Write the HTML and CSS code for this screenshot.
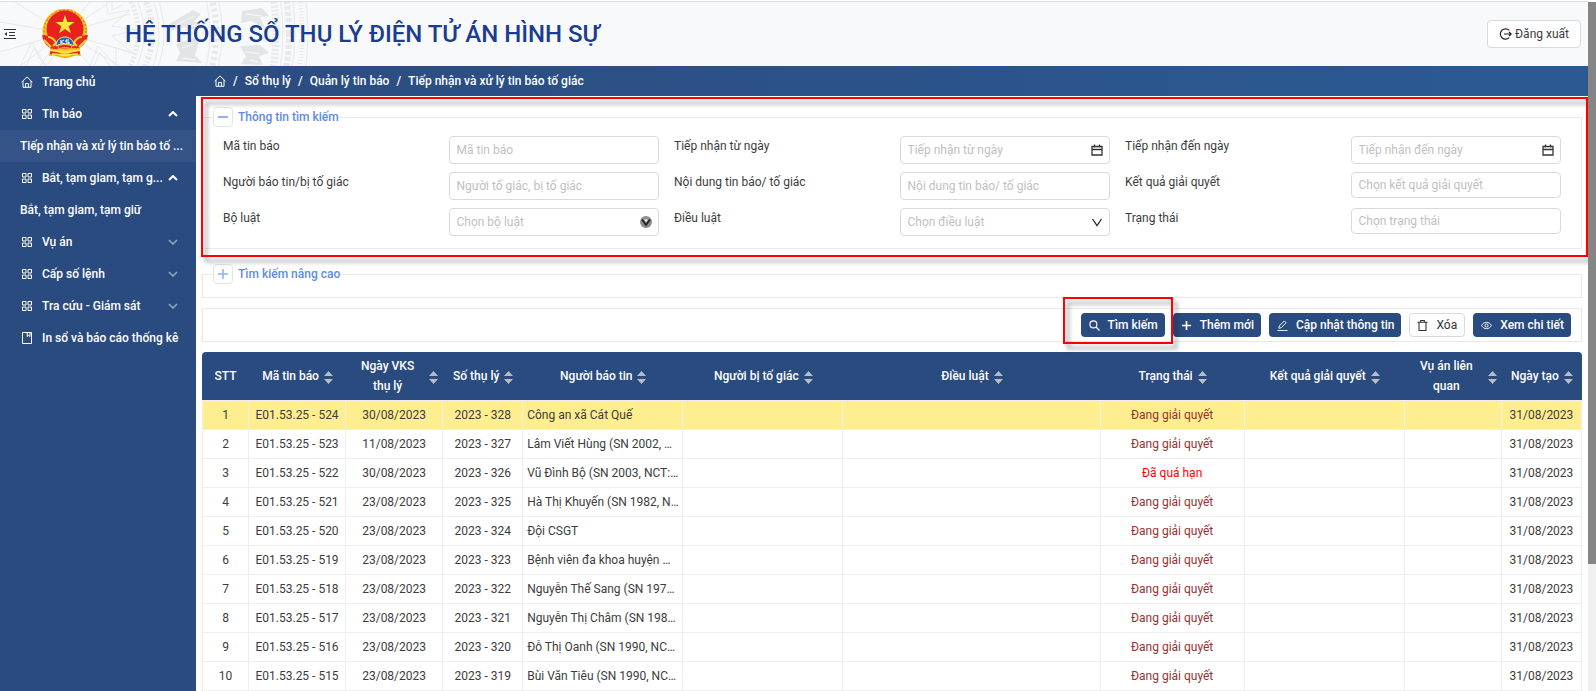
FILE: index.html
```html
<!DOCTYPE html>
<html lang="vi">
<head>
<meta charset="utf-8">
<title>Hệ thống sổ thụ lý điện tử án hình sự</title>
<link rel="stylesheet" href="styles.css">
</head>
<body>
<svg class="defs" aria-hidden="true">
  <symbol id="i-home" viewBox="0 0 12 12"><path d="M.6 6.200 6 .9l5.400 5.300M2 5v6.300h8V5M4.600 11V7.500h2.800V11" fill="none" stroke="currentColor"/></symbol>
  <symbol id="i-grid" viewBox="0 0 12 12"><path d="M1.500 1.500h3.500v3.500H1.500zM7 1.500h3.500v3.500H7zM1.500 7h3.500v3.500H1.500zM7 7h3.500v3.500H7z" fill="none" stroke="currentColor"/></symbol>
  <symbol id="i-book" viewBox="0 0 12 12"><path d="M1.500.5h9v11h-9zM6.200.5v4l1.400-1.200L9 4.500v-4" fill="none" stroke="currentColor"/></symbol>
  <symbol id="i-up" viewBox="0 0 10 6"><path d="M1 5l4-4 4 4" fill="none" stroke="currentColor" stroke-width="2"/></symbol>
  <symbol id="i-down" viewBox="0 0 10 6"><path d="M1 1l4 4 4-4" fill="none" stroke="currentColor" stroke-width="1.600"/></symbol>
  <symbol id="i-cal" viewBox="0 0 12 12"><path d="M1 2.500h10v8.500H1zM1 5.500h10M3.500.5v3M8.500.5v3" fill="none" stroke="currentColor" stroke-width="1.300"/></symbol>
  <symbol id="i-sort" viewBox="0 0 9 13"><path d="M0 5 4.500 0 9 5zM0 8h9l-4.500 5z" fill="currentColor"/></symbol>
</svg>
<div class="page">
  <header class="header">
    <svg class="drum" viewBox="0 0 310 64" aria-hidden="true">
      <g fill="none" stroke="#e8e9eb">
        <path d="M64 31 15 0M64 31 0 20M64 31 0 50M64 31 20 64M64 31 40 64M64 31 90 64M64 31 110 0M64 31 90 0M64 31 130 12M64 31 130 50M64 31 120 64M20 64 32 40 46 64 56 52M90 64 98 44 116 64 116 46 134 52 112 34 136 28 112 24 130 8 108 12 106 0M26 64 34 46 44 64M94 64 100 50 110 64M112 0 112 8 122 3"/>
        <circle cx="64" cy="31" r="74" stroke-width="5" stroke-dasharray="2 2"/>
        <circle cx="64" cy="31" r="80"/><circle cx="64" cy="31" r="88" stroke-width="6" stroke-dasharray="3 2 1 2"/>
        <circle cx="64" cy="31" r="95"/><circle cx="64" cy="31" r="100"/>
        <circle cx="64" cy="31" r="146"/><circle cx="64" cy="31" r="212" stroke-width="7" stroke-dasharray="2 2"/>
        <circle cx="64" cy="31" r="219"/><circle cx="64" cy="31" r="225" stroke-width="6" stroke-dasharray="4 2"/>
        <circle cx="64" cy="31" r="152" stroke-width="6" stroke-dasharray="3 3"/><circle cx="64" cy="31" r="158"/>
        <circle cx="64" cy="31" r="231"/><circle cx="64" cy="31" r="238" stroke-width="5" stroke-dasharray="1 2"/>
        <circle cx="64" cy="31" r="244"/>
      </g>
      <g fill="#e3e4e6">
        <path d="M169 22l24-14 8 4-7 7 12 6-10 3-16-3-9 4zM176 42l18-6 5 3-4 14 7 8-26-2 4-8zM242 9l20-3 7 8-9 1 5 11-14-7-10 2zM240 44l20-1 9 8-10 3 4 9-22-1 5-8z"/>
      </g>
      <path d="M174 24l20-10M178 27l18-4M182 46l12-4M182 56l14 2M246 12l16 2M246 50l14 2M250 58l8 2" stroke="#f8f9fb" fill="none"/>
    </svg>
    <button class="collapse" type="button" aria-label="Thu gọn menu">
      <svg width="12" height="12" viewBox="0 0 12 12"><path d="M0 1.500h12M5 4.500h6M5 7.500h6M0 10.500h12" fill="none" stroke="#333"/><path d="M3 4v4L.5 6z" fill="#333"/></svg>
    </button>
    <svg class="logo" viewBox="0 0 48 50" aria-hidden="true">
      <path d="M8 34c2 5 1 9 0 13 6-2 10 2 16 2s10-4 16-2c-1-4-2-8 0-13z" fill="#f1b51e"/>
      <path d="M10 38l11 4-3 5-9-2zM38 38l-11 4 3 5 9-2z" fill="#e3231d"/>
      <circle cx="24" cy="22" r="22.500" fill="#f5c52b"/>
      <circle cx="24" cy="22" r="21" fill="none" stroke="#cf6b15" stroke-dasharray="2 2"/>
      <circle cx="24" cy="20" r="18.500" fill="#e8211e"/>
      <path d="M1 26c1 7 5 12 11 14l26-1c5-3 8-7 9-13l-8 1c-4-1-7 2-8 5H17c-1-3-4-6-8-5z" fill="#e8281e"/>
      <path d="M7 28c3 0 6 2 8 6l-3 3M41 28c-3 0-6 2-8 6l3 3M3 31l7 7M45 31l-7 7" fill="none" stroke="#f7cf35" stroke-width="2"/>
      <path d="M24 6l2.300 7h7.300l-5.900 4.300 2.200 7L24 20.100l-5.900 4.200 2.200-7-5.900-4.300h7.300z" fill="#fde63a"/>
      <path d="M15 37c0-12 18-12 18 0-5-3-13-3-18 0z" fill="#2467aa" stroke="#f8e8a0"/>
      <path d="M20 31v4M23 31l-3 2 3 2M28 31h-3v2h3v2h-3" fill="none" stroke="#fff"/>
      <path d="M9 41l12 2h6l12-2M11 45l10 1h6l10-1" fill="none" stroke="#fce14b" stroke-width="2"/>
      <path d="M17 37c4-2 10-2 14 0l-1 3c-4-2-8-2-12 0z" fill="#e8211e" stroke="#f5c52b"/>
    </svg>
    <h1 class="title">HỆ THỐNG SỔ THỤ LÝ ĐIỆN TỬ ÁN HÌNH SỰ</h1>
    <button class="logout" type="button">
      <svg width="13" height="12" viewBox="0 0 13 12"><path d="M10.300 2.400A5.200 5.200 0 1 0 10.300 9.600M5 6h7M10 4l2.200 2L10 8" fill="none" stroke="#222" stroke-width="1.200"/></svg>
      Đăng xuất
    </button>
  </header>

  <nav class="sidebar" aria-label="Menu chính">
    <a class="item" href="#"><svg class="ico"><use href="#i-home"/></svg><span class="text">Trang chủ</span></a>
    <a class="item" href="#"><svg class="ico"><use href="#i-grid"/></svg><span class="text">Tin báo</span><svg class="arrow open"><use href="#i-up"/></svg></a>
    <a class="item active" href="#"><span class="text">Tiếp nhận và xử lý tin báo tố ...</span></a>
    <a class="item" href="#"><svg class="ico"><use href="#i-grid"/></svg><span class="text">Bắt, tạm giam, tạm g...</span><svg class="arrow open"><use href="#i-up"/></svg></a>
    <a class="item" href="#"><span class="text">Bắt, tạm giam, tạm giữ</span></a>
    <a class="item" href="#"><svg class="ico"><use href="#i-grid"/></svg><span class="text">Vụ án</span><svg class="arrow"><use href="#i-down"/></svg></a>
    <a class="item" href="#"><svg class="ico"><use href="#i-grid"/></svg><span class="text">Cấp số lệnh</span><svg class="arrow"><use href="#i-down"/></svg></a>
    <a class="item" href="#"><svg class="ico"><use href="#i-grid"/></svg><span class="text">Tra cứu - Giám sát</span><svg class="arrow"><use href="#i-down"/></svg></a>
    <a class="item" href="#"><svg class="ico"><use href="#i-book"/></svg><span class="text">In sổ và báo cáo thống kê</span></a>
  </nav>

  <div class="content">
    <nav class="crumbs" aria-label="Đường dẫn">
      <a href="#" aria-label="Trang chủ"><svg class="ico"><use href="#i-home"/></svg></a><span>/</span>
      <a href="#">Sổ thụ lý</a><span>/</span>
      <a href="#">Quản lý tin báo</a><span>/</span>
      <a href="#">Tiếp nhận và xử lý tin báo tố giác</a>
    </nav>
    <main class="main">
      <section class="search">
        <fieldset class="panel">
          <legend class="legend"><button class="toggle" type="button" aria-label="Thu gọn"><svg width="12" height="12" viewBox="0 0 12 12"><path d="M1 6h10" stroke="currentColor" stroke-width="2"/></svg></button>Thông tin tìm kiếm</legend>
          <div class="form">
            <label for="ma">Mã tin báo</label>
            <div class="field"><input id="ma" type="text" placeholder="Mã tin báo"></div>
            <label for="tu">Tiếp nhận từ ngày</label>
            <div class="field"><input id="tu" type="text" placeholder="Tiếp nhận từ ngày"><svg class="cal"><use href="#i-cal"/></svg></div>
            <label for="den">Tiếp nhận đến ngày</label>
            <div class="field"><input id="den" type="text" placeholder="Tiếp nhận đến ngày"><svg class="cal"><use href="#i-cal"/></svg></div>
            <label for="nguoi">Người báo tin/bị tố giác</label>
            <div class="field"><input id="nguoi" type="text" placeholder="Người tố giác, bị tố giác"></div>
            <label for="nd">Nội dung tin báo/ tố giác</label>
            <div class="field"><input id="nd" type="text" placeholder="Nội dung tin báo/ tố giác"></div>
            <label for="kq">Kết quả giải quyết</label>
            <div class="field"><select id="kq" class="short"><option>Chọn kết quả giải quyết</option></select></div>
            <label for="bl">Bộ luật</label>
            <div class="field"><select id="bl"><option>Chọn bộ luật</option></select><svg class="cal" viewBox="0 0 12 12"><circle cx="6" cy="6" r="6" fill="#8c8c8c"/><path d="M2 3.500 6 9l4-5.500" fill="none" stroke="#222" stroke-width="1.800"/><path d="M4.200 3.500 6 6l1.800-2.500z" fill="#fff"/></svg></div>
            <label for="dl">Điều luật</label>
            <div class="field"><select id="dl"><option>Chọn điều luật</option></select><svg class="cal" viewBox="0 0 12 12"><path d="M1.500 3 6 9.500 10.500 3" fill="none" stroke="#222" stroke-width="1.300"/></svg></div>
            <label for="tt">Trạng thái</label>
            <div class="field"><select id="tt" class="short"><option>Chọn trạng thái</option></select></div>
          </div>
        </fieldset>
        <div class="mark mark-search"></div>
      </section>

      <fieldset class="panel advanced">
        <legend class="legend"><button class="toggle" type="button" aria-label="Mở rộng"><svg width="12" height="12" viewBox="0 0 12 12"><path d="M1 6h10M6 1v10" stroke="currentColor" stroke-width="1.500"/></svg></button>Tìm kiếm nâng cao</legend>
      </fieldset>

      <div class="toolbar">
        <div class="marked">
          <button class="btn" type="button"><svg viewBox="0 0 12 12"><circle cx="4.800" cy="4.800" r="3.800" fill="none" stroke="currentColor" stroke-width="1.200"/><path d="M7.600 7.600 11.500 11.500" stroke="currentColor" stroke-width="1.300"/></svg>Tìm kiếm</button>
          <div class="mark mark-button"></div>
        </div>
        <button class="btn" type="button"><svg viewBox="0 0 12 12"><path d="M1 6h10M6 1v10" stroke="currentColor" stroke-width="1.800"/></svg>Thêm mới</button>
        <button class="btn" type="button"><svg viewBox="0 0 12 12"><path d="M.5 11.500h11M2 9l.5-2.500L8 1l2 2-5.500 5.500z" fill="none" stroke="currentColor"/></svg>Cập nhật thông tin</button>
        <button class="btn light" type="button"><svg viewBox="0 0 12 12"><path d="M.5 2.500h11M4 2.500v-2h4v2M2.200 2.500v9h7.600v-9" fill="none" stroke="currentColor" stroke-width="1.200"/></svg>Xóa</button>
        <button class="btn" type="button"><svg viewBox="0 0 12 12"><path d="M.6 6C3 1.400 9 1.400 11.400 6 9 10.600 3 10.600.6 6z" fill="none" stroke="currentColor"/><circle cx="6" cy="6" r="1.700" fill="none" stroke="currentColor"/></svg>Xem chi tiết</button>
      </div>

      <table class="grid">
        <colgroup><col class="c47"><col class="c96"><col class="c96"><col class="c80"><col class="c160"><col class="c160"><col class="c257"><col class="c144"><col class="c160"><col class="c96"><col class="c80"></colgroup>
        <thead><tr>
          <th><div>STT</div></th>
          <th><div>Mã tin báo<svg><use href="#i-sort"/></svg></div></th>
          <th><div><span>Ngày VKS thụ lý</span><svg><use href="#i-sort"/></svg></div></th>
          <th><div>Số thụ lý<svg><use href="#i-sort"/></svg></div></th>
          <th><div>Người báo tin<svg><use href="#i-sort"/></svg></div></th>
          <th><div>Người bị tố giác<svg><use href="#i-sort"/></svg></div></th>
          <th><div>Điều luật<svg><use href="#i-sort"/></svg></div></th>
          <th><div>Trạng thái<svg><use href="#i-sort"/></svg></div></th>
          <th><div>Kết quả giải quyết<svg><use href="#i-sort"/></svg></div></th>
          <th><div><span>Vụ án liên quan</span><svg><use href="#i-sort"/></svg></div></th>
          <th><div>Ngày tạo<svg><use href="#i-sort"/></svg></div></th>
        </tr></thead>
        <tbody>
          <tr class="selected"><td>1</td><td>E01.53.25 - 524</td><td>30/08/2023</td><td>2023 - 328</td><td class="name">Công an xã Cát Quế</td><td></td><td></td><td class="open">Đang giải quyết</td><td></td><td></td><td>31/08/2023</td></tr>
          <tr><td>2</td><td>E01.53.25 - 523</td><td>11/08/2023</td><td>2023 - 327</td><td class="name">Lâm Viết Hùng (SN 2002, …</td><td></td><td></td><td class="open">Đang giải quyết</td><td></td><td></td><td>31/08/2023</td></tr>
          <tr><td>3</td><td>E01.53.25 - 522</td><td>30/08/2023</td><td>2023 - 326</td><td class="name">Vũ Đình Bộ (SN 2003, NCT:…</td><td></td><td></td><td class="late">Đã quá hạn</td><td></td><td></td><td>31/08/2023</td></tr>
          <tr><td>4</td><td>E01.53.25 - 521</td><td>23/08/2023</td><td>2023 - 325</td><td class="name">Hà Thị Khuyến (SN 1982, N…</td><td></td><td></td><td class="open">Đang giải quyết</td><td></td><td></td><td>31/08/2023</td></tr>
          <tr><td>5</td><td>E01.53.25 - 520</td><td>23/08/2023</td><td>2023 - 324</td><td class="name">Đội CSGT</td><td></td><td></td><td class="open">Đang giải quyết</td><td></td><td></td><td>31/08/2023</td></tr>
          <tr><td>6</td><td>E01.53.25 - 519</td><td>23/08/2023</td><td>2023 - 323</td><td class="name">Bệnh viên đa khoa huyện …</td><td></td><td></td><td class="open">Đang giải quyết</td><td></td><td></td><td>31/08/2023</td></tr>
          <tr><td>7</td><td>E01.53.25 - 518</td><td>23/08/2023</td><td>2023 - 322</td><td class="name">Nguyễn Thế Sang (SN 197…</td><td></td><td></td><td class="open">Đang giải quyết</td><td></td><td></td><td>31/08/2023</td></tr>
          <tr><td>8</td><td>E01.53.25 - 517</td><td>23/08/2023</td><td>2023 - 321</td><td class="name">Nguyễn Thị Châm (SN 198…</td><td></td><td></td><td class="open">Đang giải quyết</td><td></td><td></td><td>31/08/2023</td></tr>
          <tr><td>9</td><td>E01.53.25 - 516</td><td>23/08/2023</td><td>2023 - 320</td><td class="name">Đỗ Thị Oanh (SN 1990, NC…</td><td></td><td></td><td class="open">Đang giải quyết</td><td></td><td></td><td>31/08/2023</td></tr>
          <tr><td>10</td><td>E01.53.25 - 515</td><td>23/08/2023</td><td>2023 - 319</td><td class="name">Bùi Văn Tiêu (SN 1990, NC…</td><td></td><td></td><td class="open">Đang giải quyết</td><td></td><td></td><td>31/08/2023</td></tr>
        </tbody>
      </table>
    </main>
  </div>
  <div class="scrollbar"><div class="thumb"></div></div>
</div>
</body>
</html>
```
FILE: styles.css
```css
* { box-sizing: border-box; }
body { margin: 0; background: #fff; font: 12px/20px Roboto, "Liberation Sans", sans-serif; color: #3c3c3c; }
button, input, select { font: inherit; color: inherit; }
a { color: inherit; text-decoration: none; }
.defs { display: none; }
.ico { width: 12px; height: 12px; flex: none; }

.page {
  display: grid;
  grid-template: "header header bar" 65px "side content bar" 1fr / 196px 1fr 8px;
  height: 100vh;
  padding-top: 1px;
  overflow: hidden;
}

.header {
  grid-area: header;
  position: relative;
  display: flex;
  align-items: center;
  padding: 0 7px 0 4px;
  border-top: 1px solid #dcdddd;
  background: #f8f9fb;
}
.drum { position: absolute; left: 0; top: 0; height: 100%; }
.collapse { position: relative; display: flex; padding: 0; border: 0; background: none; }
.logo { position: relative; width: 48px; height: 50px; margin-left: 25px; }
.title { position: relative; flex: 1; margin: 0 0 0 36px; font-size: 24px; line-height: 32px; font-weight: 500; color: #1b3d8f; }
.logout {
  display: flex;
  align-items: center;
  gap: 3px;
  height: 28px;
  padding: 0 11px;
  border: 1px solid #d9d9d9;
  border-radius: 4px;
  background: #fff;
}

.sidebar { grid-area: side; background: #2a4b80; color: #fff; font-weight: 500; }
.item { display: flex; align-items: center; height: 32px; padding: 0 16px 0 20px; }
.item.active { padding-right: 8px; background: #355387; }
.item .ico { margin: 0 9px 0 1px; }
.text { flex: 1; white-space: nowrap; }
.arrow { width: 10px; height: 6px; margin: 0 2px 0 4px; color: #8fa3c3; flex: none; }
.arrow.open { color: #fff; }

.content { grid-area: content; min-width: 0; overflow: hidden; }
.crumbs {
  display: flex;
  align-items: center;
  gap: 7px;
  height: 30px;
  padding: 0 18px;
  background: linear-gradient(90deg, #2b4c81, #2b5a93);
  color: #fff;
  font-weight: 500;
}
.crumbs a { display: flex; }
.main { padding: 11px 6px 0; }

.search { position: relative; }
.panel { min-width: 0; margin: 0; padding: 9px 20px 12px; border: 1px solid #e8e8e8; }
.legend { display: flex; align-items: center; gap: 5px; height: 20px; margin-left: -10px; padding: 0; font-weight: 500; color: #5d8be6; }
.toggle { display: flex; align-items: center; justify-content: center; width: 20px; height: 20px; padding: 0; border: 1px solid #e4e4e4; border-radius: 4px; background: #fff; color: #8db4ec; }
.form { display: grid; grid-template-columns: repeat(6, 1fr); gap: 8px 15px; }
.field { position: relative; height: 28px; }
.field input, .field select {
  display: block;
  width: 100%;
  height: 28px;
  padding: 0 7px;
  border: 1px solid #d9d9d9;
  border-radius: 4px;
  background: #fff;
  appearance: none;
  color: #bfbfbf;
}
.field .short { height: 26px; }
.field input::placeholder { color: #bfbfbf; opacity: 1; }
.cal { position: absolute; right: 7px; top: 8px; width: 12px; height: 12px; color: #333; pointer-events: none; }

.mark { position: absolute; border: 2px solid #f00; filter: drop-shadow(4px 5px 2px rgba(0, 0, 0, .4)); pointer-events: none; z-index: 2; }
.mark-search { inset: -10px -6px -8px -1px; }
.mark-button { inset: -16px -8px -7px -18px; }

.advanced { margin-top: 15px; padding: 0 20px 13px; }

.toolbar { display: flex; align-items: center; justify-content: flex-end; gap: 8px; height: 34px; margin-top: 10px; padding-right: 10px; border: 1px solid #e8e8e8; }
.marked { position: relative; }
.btn { display: flex; align-items: center; gap: 8px; height: 24px; padding: 0 7px 0 8px; border: 0; border-radius: 4px; background: #2a4b80; color: #fff; font-weight: 500; white-space: nowrap; }
.btn svg { width: 11px; height: 11px; }
.btn.light { padding: 0 7px; border: 1px solid #d9d9d9; background: #fff; color: #333; font-weight: 400; }

.grid { width: 100%; margin-top: 10px; table-layout: fixed; border-collapse: separate; border-spacing: 0; }
.c47 { width: 47px; }
.c80 { width: 80px; }
.c96 { width: 97px; }
.c144 { width: 144px; }
.c160 { width: 160px; }
.c257 { width: 257px; }
.grid th { height: 49px; padding: 0 5px; border-bottom: 1px solid #eee; background: #2a4b80; background-clip: padding-box; color: #fff; font-weight: 500; }
.grid th:first-child { border-top-left-radius: 4px; }
.grid th:last-child { border-top-right-radius: 4px; }
.grid th div { display: flex; align-items: center; justify-content: center; gap: 5px; white-space: nowrap; }
.grid th span { flex: 1; white-space: normal; }
.grid th svg { width: 9px; height: 13px; margin-top: 3px; color: #b8bcc2; flex: none; }
.grid td { height: 29px; padding: 0 4px; border: 1px solid #eee; border-width: 0 1px 1px 0; text-align: center; white-space: nowrap; overflow: hidden; }
.grid td:first-child { border-left-width: 1px; }
.grid .name { text-align: left; }
.grid .open { color: #983232; }
.grid .late { color: #f00; }
.selected td { background: #ffee8f; }

.scrollbar { grid-area: bar; margin-top: 1px; background: #f0f0f0; }
.thumb { height: 81.5%; background: #858585; }
```
